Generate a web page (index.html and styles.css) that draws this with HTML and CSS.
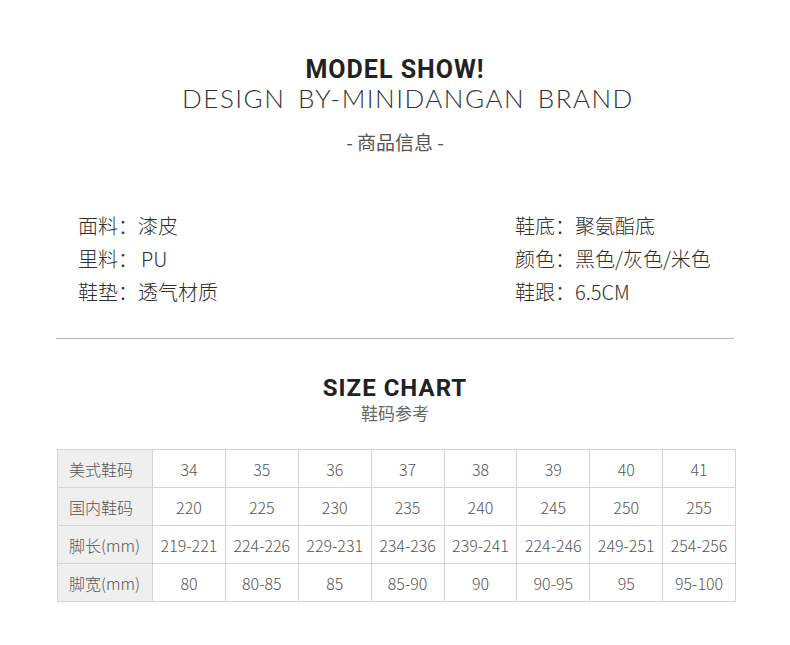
FILE: index.html
```html
<!DOCTYPE html>
<html lang="zh-CN">
<head>
<meta charset="utf-8">
<title>Model Show</title>
<link rel="stylesheet" href="styles.css">
</head>
<body>
<div class="page">
  <header class="hero">
    <h1 class="hero-title">MODEL SHOW!</h1>
    <p class="hero-sub">DESIGN BY-MINIDANGAN BRAND</p>
    <p class="hero-tag">- 商品信息 -</p>
  </header>

  <section class="specs">
    <div class="spec-col">
      <div class="spec"><span class="spec-k">面料：</span><span class="spec-v">漆皮</span></div>
      <div class="spec"><span class="spec-k">里料：</span><span class="spec-v spec-latin">PU</span></div>
      <div class="spec"><span class="spec-k">鞋垫：</span><span class="spec-v">透气材质</span></div>
    </div>
    <div class="spec-col">
      <div class="spec"><span class="spec-k">鞋底：</span><span class="spec-v">聚氨酯底</span></div>
      <div class="spec"><span class="spec-k">颜色：</span><span class="spec-v">黑色/灰色/米色</span></div>
      <div class="spec"><span class="spec-k">鞋跟：</span><span class="spec-v">6.5CM</span></div>
    </div>
  </section>

  <hr class="divider">

  <section class="chart">
    <h2 class="chart-title">SIZE CHART</h2>
    <p class="chart-sub">鞋码参考</p>
    <table class="size-table">
      <tbody>
        <tr><th>美式鞋码</th><td>34</td><td>35</td><td>36</td><td>37</td><td>38</td><td>39</td><td>40</td><td>41</td></tr>
        <tr><th>国内鞋码</th><td>220</td><td>225</td><td>230</td><td>235</td><td>240</td><td>245</td><td>250</td><td>255</td></tr>
        <tr><th>脚长(mm)</th><td>219-221</td><td>224-226</td><td>229-231</td><td>234-236</td><td>239-241</td><td>224-246</td><td>249-251</td><td>254-256</td></tr>
        <tr><th>脚宽(mm)</th><td>80</td><td>80-85</td><td>85</td><td>85-90</td><td>90</td><td>90-95</td><td>95</td><td>95-100</td></tr>
      </tbody>
    </table>
  </section>
</div>
</body>
</html>
```

FILE: styles.css
```css
* { box-sizing: border-box; }
html, body { margin: 0; padding: 0; background: #fff; }
body {
  font-family: "Noto Sans CJK SC", "Noto Sans", sans-serif;
  color: #333;
}
.page {
  width: 790px;
  height: 645px;
  overflow: hidden;
}
.hero {
  padding-top: 55px;
  text-align: center;
}
.hero-title {
  margin: 0;
  font-family: Roboto, "Liberation Sans", sans-serif;
  font-weight: 700;
  font-size: 25px;
  line-height: 30px;
  letter-spacing: 1px;
  color: #222;
}
.hero-sub {
  margin: -2px 0 0;
  padding-left: 26px;
  font-family: Lato, "Liberation Sans", sans-serif;
  font-weight: 300;
  font-size: 26px;
  line-height: 30px;
  letter-spacing: 1.5px;
  word-spacing: 4px;
  color: #333;
}
.hero-tag {
  margin: 15px 0 0;
  font-size: 19px;
  line-height: 28px;
  color: #555;
}
.specs {
  display: grid;
  grid-template-columns: 437px 1fr;
  padding-left: 78px;
  margin-top: 53px;
}
.spec {
  font-size: 20px;
  font-weight: 300;
  line-height: 33px;
  color: #2e2e2e;
  white-space: nowrap;
}
.spec-latin { margin-left: 3px; }
.divider {
  margin: 30px 56px 0 56px;
  border: 0;
  border-top: 1px solid #b4b4b4;
  height: 0;
}
.chart {
  text-align: center;
  padding-top: 35px;
}
.chart-title {
  margin: 0;
  font-family: Roboto, "Liberation Sans", sans-serif;
  font-weight: 700;
  font-size: 24px;
  line-height: 28px;
  letter-spacing: 1px;
  color: #222;
}
.chart-sub {
  margin: 0;
  font-size: 17px;
  line-height: 22px;
  color: #666;
}
.size-table {
  margin: 25px 0 0 57px;
  border-collapse: collapse;
  width: 679px;
  table-layout: fixed;
}
.size-table th,
.size-table td {
  border: 1px solid #d4d4d4;
  height: 38px;
  padding: 0;
  font-size: 16px;
  font-weight: 300;
  color: #555;
}
.size-table th {
  width: 95px;
  text-align: left;
  padding-left: 11px;
  background: #efefef;
}
.size-table td {
  text-align: center;
}
```
